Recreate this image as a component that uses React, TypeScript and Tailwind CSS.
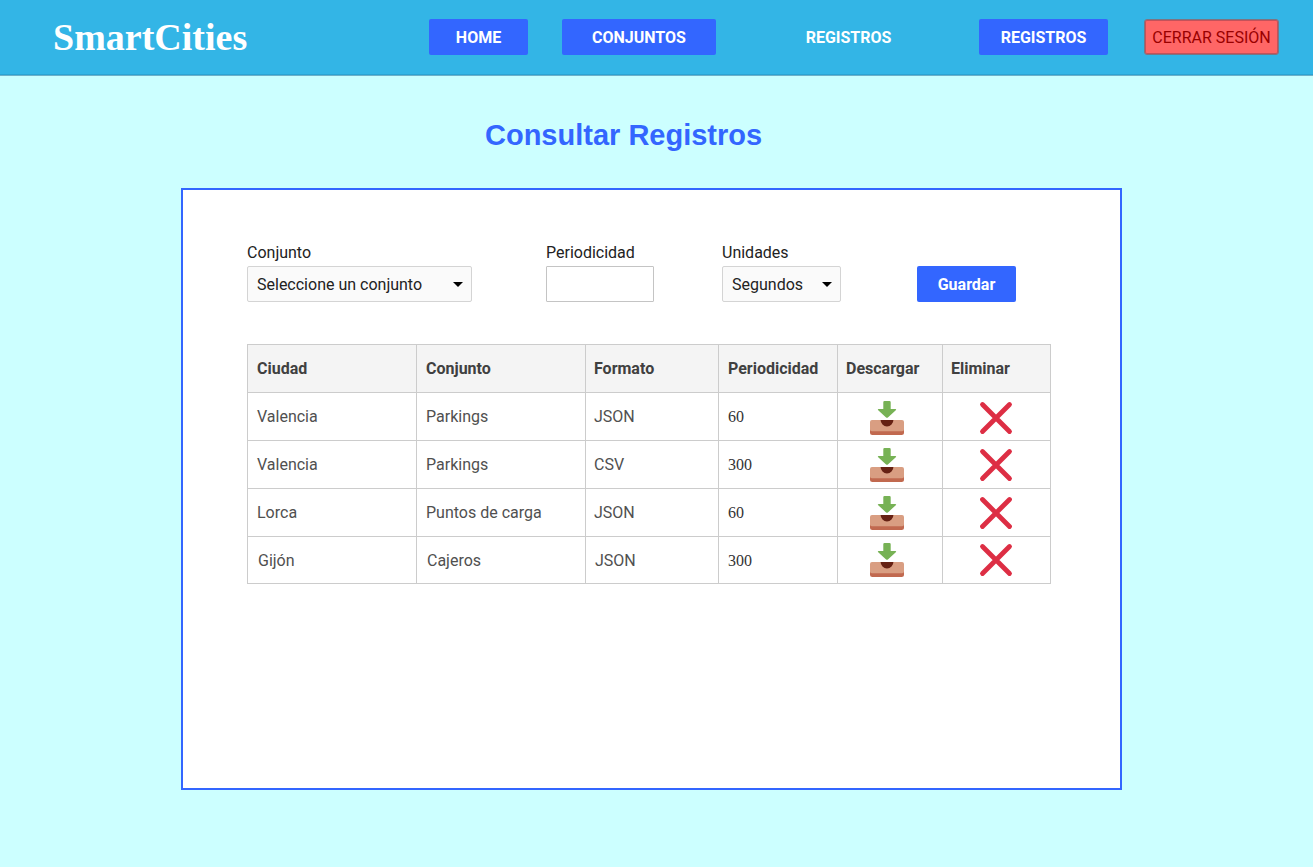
import type { ReactNode } from "react";

type Row = {
  city: string;
  dataset: string;
  format: string;
  period: string;
};

const rows: Row[] = [
  { city: "Valencia", dataset: "Parkings", format: "JSON", period: "60" },
  { city: "Valencia", dataset: "Parkings", format: "CSV", period: "300" },
  { city: "Lorca", dataset: "Puntos de carga", format: "JSON", period: "60" },
  { city: "Gijón", dataset: "Cajeros", format: "JSON", period: "300" },
];

// Vertical nudge of the action icons, row by row.
const iconPads = ["pt-[8px]", "pt-[7px]", "pt-[7px]", "pt-[6px]"];

function DownloadIcon() {
  return (
    <svg className="block h-[34px] w-[34px]" viewBox="0 0 34 34" aria-hidden="true">
      <path d="M13.3 1.2Q13.3 0 14.5 0h5Q20.7 0 20.7 1.2V8h4.6q1.6 0 .5 1.2l-7.9 7.2q-.9.8-1.8 0L8.2 9.2Q7.100 8 8.700 8h4.600z" fill="#77b255" />
      <path d="M0 27h34v4.500a2.500 2.500 0 0 1-2.500 2.500h-29A2.500 2.500 0 0 1 0 31.500z" fill="#c1694f" />
      <path d="M0 21a2 2 0 0 1 2-2h30a2 2 0 0 1 2 2v7.500a1.800 1.800 0 0 1-1.800 1.800H1.800A1.800 1.800 0 0 1 0 28.500z" fill="#d99e82" />
      <path d="M10.600 19h12.800a6.400 6.400 0 0 1-12.800 0z" fill="#662113" />
    </svg>
  );
}

function DeleteIcon() {
  return (
    <svg className="block h-[34px] w-[34px]" viewBox="0 0 34 34" aria-hidden="true">
      <path d="M3.500 3.500 30.500 30.500M30.500 3.500 3.500 30.500" stroke="#dd2e44" strokeWidth="4.800" strokeLinecap="round" />
    </svg>
  );
}

function Caret() {
  return (
    <svg className="block h-[5px] w-[10px]" viewBox="0 0 10 5" aria-hidden="true">
      <path d="M0 0h10L5 5z" fill="#000" />
    </svg>
  );
}

function Field({ label, className, children }: { label: string; className: string; children: ReactNode }) {
  return (
    <div className={`flex flex-col ${className}`}>
      <span className="h-[25px] leading-6 text-[#222]">{label}</span>
      {children}
    </div>
  );
}

function Dropdown({ value }: { value: string }) {
  return (
    <button className="flex h-9 w-full items-center justify-between rounded-[2px] border border-[#d4d4d4] bg-[#fafafa] pr-[8px] pl-[9px] text-[#222]">
      <span className="pt-0.5">{value}</span>
      <Caret />
    </button>
  );
}

const navButton = "flex h-9 items-center justify-center rounded-[2px] pt-0.5 font-bold text-white";
const cell = "border border-[#ccc] p-0 text-left text-[#505050]";
const head = "border border-[#ccc] p-0 text-left font-bold text-[#404040]";

export default function App() {
  return (
    <div className="min-h-[867px] w-full bg-[#ccffff] font-['Roboto',sans-serif] text-base">
      <header className="flex h-[76px] items-start border-b border-[#6fb0c8] bg-[#33b5e6] pt-[19px] shadow-[inset_0_-1px_0_#2ba3d3]">
        <div className="w-[376px] pl-[53px] font-['Liberation_Serif',serif] text-[38px] leading-[36px] font-bold text-white">
          SmartCities
        </div>
        <nav className="ml-[53px] flex">
          <a className={`${navButton} w-[99px] bg-[#3366ff]`}>HOME</a>
          <a className={`${navButton} ml-[34px] w-[154px] bg-[#3366ff]`}>CONJUNTOS</a>
          <a className={`${navButton} ml-[68px] w-[129px]`}>REGISTROS</a>
          <a className={`${navButton} ml-[66px] w-[129px] bg-[#3366ff]`}>REGISTROS</a>
          <a className="ml-9 flex h-9 w-[135px] items-center justify-center rounded-[3px] border border-[#7b7583] bg-[#ff6666] pt-0.5 whitespace-nowrap text-[#990000] shadow-[inset_0_0_0_1px_#c4525a]">
            CERRAR SESIÓN
          </a>
        </nav>
      </header>

      <main>
        <h1 className="h-[112px] pt-[41px] pl-[485px] font-['Liberation_Sans',sans-serif] text-[29px] leading-[36px] font-bold text-[#3366ff]">
          Consultar Registros
        </h1>

        <section className="ml-[181px] h-[602px] w-[941px] border-2 border-[#3366ff] bg-white pt-[51px] pl-[64px]">
          <form className="flex items-end">
            <Field label="Conjunto" className="w-[225px]">
              <Dropdown value="Seleccione un conjunto" />
            </Field>
            <Field label="Periodicidad" className="ml-[74px] w-[108px]">
              <input className="h-9 w-full rounded-[1px] border border-[#c4c4c4] bg-white px-2" />
            </Field>
            <Field label="Unidades" className="ml-[68px] w-[119px]">
              <Dropdown value="Segundos" />
            </Field>
            <button type="button" className="ml-[76px] h-9 w-[99px] rounded-[2px] bg-[#3366ff] pt-0.5 font-bold text-white">
              Guardar
            </button>
          </form>

          <table className="mt-[42px] w-[804px] table-fixed border-collapse">
            <colgroup>
              <col className="w-[169px]" />
              <col className="w-[169px]" />
              <col className="w-[133px]" />
              <col className="w-[119px]" />
              <col className="w-[105px]" />
              <col className="w-[108px]" />
            </colgroup>
            <thead>
              <tr className="h-12 bg-[#f4f4f4]">
                <th className={`${head} pl-[9px]`}>Ciudad</th>
                <th className={`${head} pl-[9px]`}>Conjunto</th>
                <th className={`${head} pl-[8px]`}>Formato</th>
                <th className={`${head} pl-[9px]`}>Periodicidad</th>
                <th className={`${head} pl-[8px]`}>Descargar</th>
                <th className={`${head} pl-[8px]`}>Eliminar</th>
              </tr>
            </thead>
            <tbody>
              {rows.map((row, i) => {
                const last = i === rows.length - 1;
                const shift = last ? "block pt-0.5 pl-px" : "block";
                return (
                  <tr key={i} className={last ? "h-[47px]" : "h-12"}>
                    <td className={`${cell} pl-[9px]`}>
                      <span className={shift}>{row.city}</span>
                    </td>
                    <td className={`${cell} pl-[9px]`}>
                      <span className={shift}>{row.dataset}</span>
                    </td>
                    <td className={`${cell} pl-[8px]`}>
                      <span className={shift}>{row.format}</span>
                    </td>
                    <td className="border border-[#ccc] p-0 pl-[9px] font-['Liberation_Serif',serif] text-[#333]">
                      <span className={last ? "block pt-0.5" : "block"}>{row.period}</span>
                    </td>
                    <td className={`border border-[#ccc] pb-0 pl-[32px] align-top ${iconPads[i]}`}>
                      <DownloadIcon />
                    </td>
                    <td className={`border border-[#ccc] pb-0 pl-[36px] align-top ${iconPads[i]}`}>
                      <DeleteIcon />
                    </td>
                  </tr>
                );
              })}
            </tbody>
          </table>
        </section>
      </main>
    </div>
  );
}
